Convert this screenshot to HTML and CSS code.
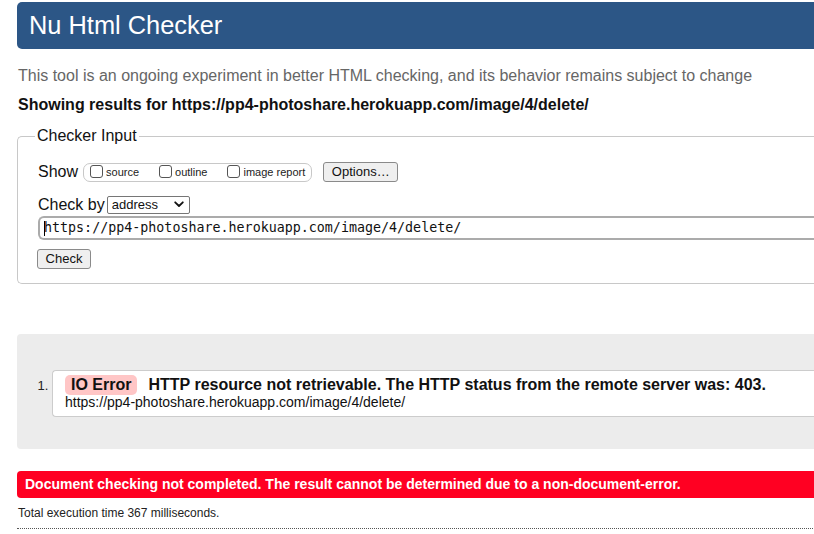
FILE: index.html
```html
<!DOCTYPE html>
<html lang="en">
<head>
<meta charset="utf-8">
<title>Nu Html Checker</title>
<link rel="stylesheet" href="styles.css">
</head>
<body>
<div class="page">
  <h1 class="title">Nu Html Checker</h1>
  <p class="intro">This tool is an ongoing experiment in better HTML checking, and its behavior remains subject to change</p>
  <p class="showing">Showing results for https://pp4-photoshare.herokuapp.com/image/4/delete/</p>

  <fieldset class="input-set">
    <legend class="legend">Checker Input</legend>
    <div class="row show-row">
      <span class="lbl">Show</span>
      <span class="opts">
        <label class="opt"><span class="cb"></span>source</label>
        <label class="opt"><span class="cb"></span>outline</label>
        <label class="opt"><span class="cb"></span>image report</label>
      </span>
      <span class="btn options-btn">Options…</span>
    </div>
    <div class="row checkby-row">
      <span class="lbl">Check by</span>
      <span class="select">address
        <svg class="chev" width="10" height="7" viewBox="0 0 10 7"><path d="M1.2 1.3 L5 5 L8.8 1.3" fill="none" stroke="#111" stroke-width="1.8" stroke-linecap="round" stroke-linejoin="round"/></svg>
      </span>
    </div>
    <div class="url-input"><span class="caret"></span>https://pp4-photoshare.herokuapp.com/image/4/delete/</div>
    <span class="btn check-btn">Check</span>
  </fieldset>

  <div class="results">
    <ol class="msgs">
      <li class="msg">
        <p class="msg-line"><strong class="badge">IO Error</strong><span class="msg-text">HTTP resource not retrievable. The HTTP status from the remote server was: 403.</span></p>
        <p class="msg-url">https://pp4-photoshare.herokuapp.com/image/4/delete/</p>
      </li>
    </ol>
  </div>

  <p class="failure">Document checking not completed. The result cannot be determined due to a non-document-error.</p>
  <p class="stats">Total execution time 367 milliseconds.</p>
  <div class="rule"></div>
</div>
</body>
</html>
```
FILE: styles.css
```css
html, body {
  margin: 0;
  padding: 0;
  background: #fff;
  overflow: hidden;
}
body {
  font-family: "Liberation Sans", Arial, sans-serif;
  color: #111;
}
.page {
  width: 840px;
  padding: 2px 0 0 17px;
}
.title {
  margin: 0;
  height: 47px;
  box-sizing: border-box;
  background: #2c5686;
  color: #fff;
  font-weight: normal;
  font-size: 25.4px;
  line-height: 47px;
  padding-left: 12px;
  border-radius: 5px 0 0 5px;
}
.intro {
  margin: 18px 0 0 1px;
  font-size: 16px;
  color: #666;
  line-height: 18px;
}
.showing {
  margin: 11px 0 0 1px;
  font-size: 16px;
  font-weight: bold;
  line-height: 18px;
}
.input-set {
  margin: 13px 0 0 0;
  border: 1px solid #c8c8c8;
  border-right: none;
  border-radius: 5px 0 0 5px;
  padding: 13px 0 14px 20px;
}
.legend {
  font-size: 16px;
  padding: 0 2px;
  margin-left: -3px;
  line-height: 18px;
}
.row {
  display: flex;
  align-items: center;
}
.lbl {
  font-size: 16px;
  line-height: 18px;
}
.show-row {
  height: 20px;
  margin-top: 4px;
}
.opts {
  display: flex;
  align-items: center;
  height: 19px;
  box-sizing: border-box;
  border: 1px solid #c8c8c8;
  border-radius: 7px;
  margin-left: 5px;
  padding: 0 6px 0 6px;
  gap: 20px;
}
.opt {
  display: flex;
  align-items: center;
  font-size: 11px;
  color: #222;
}
.cb {
  width: 11px;
  height: 11px;
  border: 1px solid #555;
  border-radius: 3px;
  margin-right: 3px;
  margin-top: -2px;
  background: #fff;
}
.btn {
  display: inline-block;
  box-sizing: border-box;
  border: 1px solid #8a8a8a;
  border-radius: 3px;
  background: #efefef;
  font-size: 13px;
  color: #111;
  text-align: center;
}
.options-btn {
  width: 75px;
  height: 20px;
  line-height: 18px;
  margin-left: 11px;
}
.checkby-row {
  margin-top: 13px;
  height: 19px;
}
.select {
  display: flex;
  align-items: center;
  justify-content: space-between;
  width: 83px;
  height: 18px;
  box-sizing: border-box;
  border: 1px solid #767676;
  border-radius: 2px;
  margin-left: 2px;
  padding: 0 5px 0 4px;
  font-size: 13px;
}
.chev {
  display: block;
}
.url-input {
  margin-top: 2px;
  height: 24px;
  box-sizing: border-box;
  border: 2px solid #ababab;
  border-right: none;
  border-radius: 6px 0 0 6px;
  font-family: "DejaVu Sans Mono", monospace;
  font-size: 13.33px;
  line-height: 20px;
  padding-left: 4px;
  display: flex;
  align-items: center;
  color: #111;
}
.caret {
  width: 1px;
  height: 15px;
  background: #000;
  margin-right: -1px;
}
.check-btn {
  margin-top: 9px;
  margin-left: -1px;
  width: 54px;
  height: 20px;
  line-height: 18px;
}
.results {
  margin-top: 50px;
  background: #ececec;
  border-radius: 4px 0 0 4px;
  height: 115px;
  box-sizing: border-box;
  padding-top: 36px;
}
.msgs {
  margin: 0;
  padding: 0 0 0 35px;
  font-size: 13px;
}
.msg {
  background: #fff;
  border: 1px solid #cccccc;
  border-right: none;
  border-radius: 4px 0 0 4px;
  height: 47px;
  box-sizing: border-box;
  padding: 4px 0 0 12px;
}
.msg::marker {
  font-size: 13px;
  color: #222;
}
.msg-line {
  margin: 0;
  display: flex;
  align-items: center;
  font-size: 16px;
  font-weight: bold;
  line-height: 20px;
}
.badge {
  background: #ffc6c6;
  border-radius: 5px;
  padding: 0 6px;
  height: 20px;
  margin-right: 11px;
}
.msg-url {
  margin: 0;
  font-size: 14px;
  line-height: 15px;
  color: #111;
}
.failure {
  margin: 22px 0 0 0;
  background: #ff0022;
  color: #fff;
  font-weight: bold;
  font-size: 14px;
  height: 27px;
  line-height: 27px;
  padding-left: 8px;
  border-radius: 4px 0 0 4px;
}
.stats {
  margin: 8px 0 0 1px;
  font-size: 12px;
  line-height: 14px;
  color: #222;
}
.rule {
  margin-top: 8px;
  border-top: 1px dotted #555;
}
```
